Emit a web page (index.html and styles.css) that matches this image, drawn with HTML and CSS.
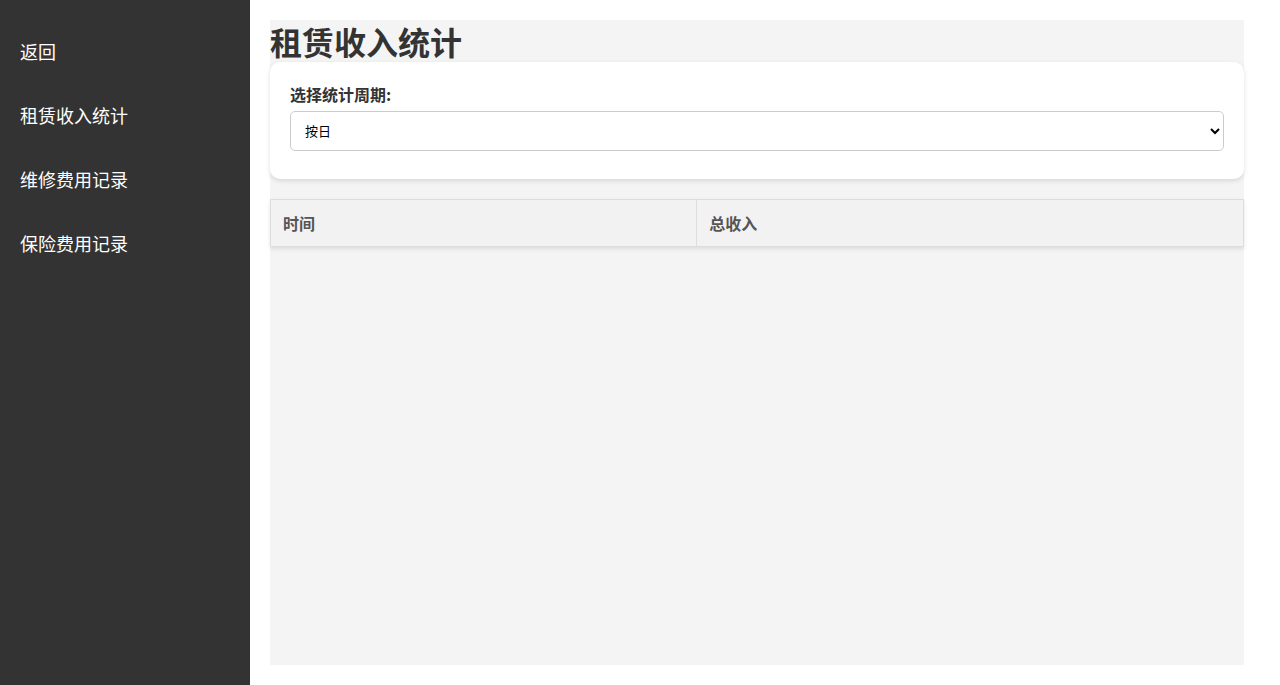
FILE: index.html
```html
<!DOCTYPE html>
<html lang="zh-CN">
<head>
<meta charset="UTF-8" />
<meta name="viewport" content="width=device-width, initial-scale=1" />
<title>租赁收入统计</title>
<link rel="stylesheet" href="styles.css">
</head>
<body>
<div class="sidebar">
  <a href="#">返回</a>
  <a href="#">租赁收入统计</a>
  <a href="#">维修费用记录</a>
  <a href="#">保险费用记录</a>
</div>

<div class="main">
  <div class="content">
    <h1>租赁收入统计</h1>
    <div class="card">
      <label for="period">选择统计周期:</label>
      <select id="period">
        <option value="day">按日</option>
        <option value="week">按周</option>
        <option value="month">按月</option>
        <option value="year">按年</option>
      </select>
    </div>

    <table class="income-table">
      <thead>
        <tr>
          <th class="col-time">时间</th>
          <th>总收入</th>
        </tr>
      </thead>
      <tbody id="income-body"></tbody>
    </table>
  </div>
</div>
</body>
</html>
```

FILE: styles.css
```css
* {
  box-sizing: border-box;
}

html {
  overflow-y: scroll;
}

body {
  margin: 0;
  display: flex;
  font-family: "Noto Sans CJK SC", "Noto Sans", sans-serif;
  color: #333;
  background: #fff;
}

.sidebar {
  width: 250px;
  flex-shrink: 0;
  min-height: calc(100vh + 5px);
  background: #333;
  padding-top: 19px;
}

.sidebar a {
  display: block;
  color: #fff;
  text-decoration: none;
  font-size: 18px;
  line-height: 24px;
  padding: 20px;
}

.sidebar a:hover {
  background: #444;
}

.main {
  flex: 1;
  padding: 20px 36px 20px 20px;
}

.content {
  background: #f4f4f4;
  height: calc(100vh - 40px);
}

h1 {
  margin: 0;
  font-size: 32px;
  line-height: 42px;
  font-weight: bold;
  color: #333;
}

.card {
  background: #fff;
  border-radius: 10px;
  box-shadow: 0 2px 5px rgba(0,0,0,0.12);
  padding: 20px 20px 28px;
}

.card label {
  display: block;
  font-size: 16px;
  font-weight: bold;
  line-height: 24px;
  margin-bottom: 5px;
}

.card select {
  display: block;
  width: 100%;
  height: 40px;
  padding: 0 10px;
  border: 1px solid #ccc;
  border-radius: 5px;
  background: #fff;
  font-size: 13px;
  color: #000;
}

.income-table {
  width: 100%;
  margin-top: 20px;
  border-collapse: collapse;
  box-shadow: 0 2px 4px rgba(0,0,0,0.1);
}

.income-table th {
  background: #f2f2f2;
  border: 1px solid #ddd;
  padding: 12px;
  text-align: left;
  font-size: 16px;
  line-height: 22px;
  color: #555;
}

.income-table .col-time {
  width: 43.8%;
}
```
